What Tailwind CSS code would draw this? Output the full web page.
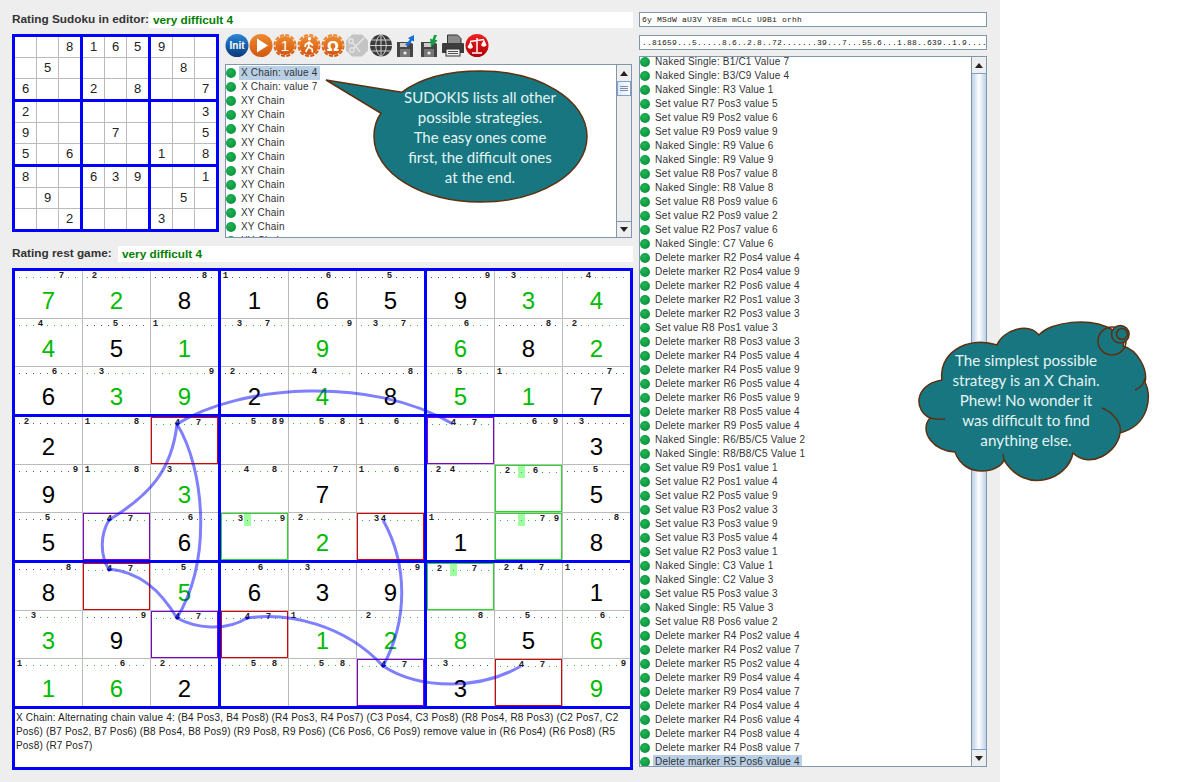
<!DOCTYPE html>
<html lang="en">

<head>
    <meta charset="UTF-8">
    <script src="https://cdn.jsdelivr.net/npm/@tailwindcss/browser@4"></script>
    <title>Sudokis</title>
</head>

<body class="bg-white font-['Liberation_Sans',sans-serif]">
    <svg class="absolute w-0 h-0">
        <defs>
            <linearGradient id="orange" x1="0" y1="0" x2="0" y2="1"><stop offset="0" stop-color="#ee8a30"/><stop offset="1" stop-color="#d4560e"/></linearGradient>
            <linearGradient id="blue" x1="0" y1="0" x2="0" y2="1"><stop offset="0" stop-color="#2a86d8"/><stop offset="1" stop-color="#0a3878"/></linearGradient>
            <linearGradient id="red" x1="0" y1="0" x2="0" y2="1"><stop offset="0" stop-color="#f02020"/><stop offset="1" stop-color="#b00008"/></linearGradient>
        </defs>
    </svg>

    <div class="relative w-[1200px] h-[782px] overflow-hidden">
        <div class="w-[1000px] h-[782px] bg-[#eeeeee] flex pl-3 pt-3 gap-[6px]">
            <!-- Left column -->
            <div class="w-[621px]">
                <div class="flex items-center h-4">
                    <span class="w-[137px] whitespace-nowrap text-[11.8px] font-bold text-[#333333]">Rating Sudoku in editor:</span>
                    <div class="flex-1 h-4 bg-white pl-1 text-[11.8px] leading-4 font-bold text-[#008000]">very difficult 4</div>
                </div>

                <div class="flex mt-[6px] gap-[6px] h-[204px]">
                    <div id="editor" class="w-[207px] h-[198px] bg-[#0000ff] p-[3px] grid grid-cols-[repeat(3,65px)] grid-rows-[repeat(3,62px)] gap-[3px]"></div>
                    <div class="w-[407px]">
                        <div class="flex h-[30px] items-start">
                            <svg class="w-6 h-6" viewBox="0 0 24 24"><circle cx="12" cy="11.5" r="11.5" fill="url(#blue)"/><text x="12" y="15" text-anchor="middle" font-size="10" font-weight="700" fill="#fff" font-family="Liberation Sans">Init</text></svg>
                            <svg class="w-6 h-6" viewBox="0 0 24 24"><circle cx="12" cy="11.5" r="11.5" fill="url(#orange)"/><path d="M8 4.5 19 11.5 8 18.5Z" fill="#fff"/></svg>
                            <svg class="w-6 h-6" viewBox="0 0 24 24"><circle cx="12" cy="11.5" r="9.5" fill="url(#orange)"/><circle cx="12" cy="11.5" r="10.5" fill="none" stroke="url(#orange)" stroke-width="2" stroke-dasharray="4 1.5"/><text x="12" y="17" text-anchor="middle" font-size="15" fill="#fff" font-family="Liberation Sans">1</text></svg>
                            <svg class="w-6 h-6" viewBox="0 0 24 24"><circle cx="12" cy="11.5" r="9.5" fill="url(#orange)"/><circle cx="12" cy="11.5" r="10.5" fill="none" stroke="url(#orange)" stroke-width="2" stroke-dasharray="4 1.5"/><circle cx="12.5" cy="4.8" r="1.7" fill="#fff"/><path d="M12.5 7.5 11.5 13 8.5 18M11.5 13 15 15 15.5 18.5M12.5 8 8.5 10.5 8 13M12.5 8.5 16 11.5" fill="none" stroke="#fff" stroke-width="1.7"/></svg>
                            <svg class="w-6 h-6" viewBox="0 0 24 24"><circle cx="12" cy="11.5" r="9.5" fill="url(#orange)"/><circle cx="12" cy="11.5" r="10.5" fill="none" stroke="url(#orange)" stroke-width="2" stroke-dasharray="4 1.5"/><text x="12" y="16.5" text-anchor="middle" font-size="14" font-weight="700" fill="#fff" font-family="DejaVu Sans">Ω</text></svg>
                            <svg class="w-6 h-6" viewBox="0 0 24 24"><path d="M7 .5h10l6 6v10l-6 6H7l-6-6v-10Z" fill="#c4c4c4"/><path d="M19 4 9 14M8 9 15 18" stroke="#e4e4e4" stroke-width="1.6" fill="none"/><circle cx="7" cy="16" r="2.2" fill="none" stroke="#e4e4e4" stroke-width="1.4"/><circle cx="6" cy="7" r="2.2" fill="none" stroke="#e4e4e4" stroke-width="1.4"/></svg>
                            <svg class="w-6 h-6" viewBox="0 0 24 24"><circle cx="12" cy="11.5" r="11" fill="#3c3c3c"/><path d="M1 11.5h22M2.5 6h19M2.5 17h19M12 .5v22M12 .5C5 5 5 18 12 22.5M12 .5C19 5 19 18 12 22.5" fill="none" stroke="#ddd" stroke-width=".9"/></svg>
                            <svg class="w-6 h-6" viewBox="0 0 24 24"><path d="M4 8h13l3 2v13H4Z" fill="#444444"/><rect x="7" y="9" width="7" height="4" fill="#cccccc"/><rect x="7" y="15" width="10" height="8" fill="#777777"/><circle cx="12" cy="19" r="1.6" fill="#eeeeee"/><path d="M12 11 17 5.5 15 4 21 1 21 7.5 19 6.5 15 12Z" fill="#1470d8"/></svg>
                            <svg class="w-6 h-6" viewBox="0 0 24 24"><path d="M4 8h13l3 2v13H4Z" fill="#444444"/><rect x="7" y="9" width="7" height="4" fill="#cccccc"/><rect x="7" y="15" width="10" height="8" fill="#777777"/><circle cx="12" cy="19" r="1.6" fill="#eeeeee"/><path d="M20 1 18 5.5 20.5 6.5 14 13 13 4.5 15.5 5.5 17 1Z" fill="#10a040"/></svg>
                            <svg class="w-6 h-6" viewBox="0 0 24 24"><path d="M6.5 1h10l3.5 3.5V10H6.5Z" fill="#8a8a8a" stroke="#333"/><path d="M2 9h20a1 1 0 0 1 1 1v9H1v-9a1 1 0 0 1 1-1Z" fill="#3c3c3c"/><rect x="5" y="15" width="14" height="7" fill="#eee" stroke="#333"/><path d="M7 17.5h10M7 19.5h10" stroke="#555"/></svg>
                            <svg class="w-6 h-6" viewBox="0 0 24 24"><circle cx="12" cy="11.5" r="11.5" fill="url(#red)"/><path d="M12 4v14M7 19h10M5 7.5 19 5.5" stroke="#fff" stroke-width="1.5" fill="none"/><path d="M2.5 13 5.5 7.5 8 13a3 3 0 0 1-5.5 0ZM16 11 19 5.5 21.5 11a3 3 0 0 1-5.5 0Z" fill="#fff"/></svg>
                        </div>
                        <div class="relative h-[174px] bg-white border border-[#8296ab] overflow-hidden">
                            <div id="strategies" class="pt-px"></div>
                            <div class="absolute right-0 top-0 bottom-0 w-[15px] bg-[#eeeeee] border-l border-[#8296ab] flex flex-col">
                                <div class="h-4 flex items-center justify-center"><div class="w-0 h-0 border-x-[4px] border-x-transparent border-b-[5px] border-b-[#222222]"></div></div>
                                <div class="h-[15px] bg-gradient-to-r from-[#dde8f5] to-white border border-[#7fa0d0] flex flex-col justify-center gap-px px-[2px]">
                                    <div class="h-px bg-[#7a8fb0]"></div><div class="h-px bg-[#7a8fb0]"></div><div class="h-px bg-[#7a8fb0]"></div>
                                </div>
                                <div class="flex-1"></div>
                                <div class="h-4 border-t border-[#8296ab] flex items-center justify-center"><div class="w-0 h-0 border-x-[4px] border-x-transparent border-t-[5px] border-t-[#222222]"></div></div>
                            </div>
                        </div>
                    </div>
                </div>

                <div class="flex items-center h-4 mt-2">
                    <span class="w-[106px] whitespace-nowrap text-[11.8px] font-bold text-[#333333]">Rating rest game:</span>
                    <div class="flex-1 h-4 bg-white pl-1 text-[11.8px] leading-4 font-bold text-[#008000]">very difficult 4</div>
                </div>

                <div class="mt-[6px] w-[621px] bg-[#0000ff] p-[3px]">
                    <div id="game" class="grid grid-cols-[repeat(3,203px)] grid-rows-[repeat(3,143px)] gap-[3px]"></div>
                    <div class="mt-[3px] h-[58px] bg-white px-px pt-[2px] text-[10px] leading-[14px] tracking-[0.17px] text-[#222222]">
                        X Chain: Alternating chain value 4: (B4 Pos3, B4 Pos8) (R4 Pos3, R4 Pos7) (C3 Pos4, C3 Pos8) (R8 Pos4, R8 Pos3) (C2 Pos7, C2 Pos6) (B7 Pos2, B7 Pos6) (B8 Pos4, B8 Pos9) (R9 Pos8, R9 Pos6) (C6 Pos6, C6 Pos9) remove value in (R6 Pos4) (R6 Pos8) (R5 Pos8) (R7 Pos7)
                    </div>
                </div>
            </div>

            <!-- Right column -->
            <div class="w-[348px]">
                <div class="h-[15px] bg-white border border-[#8296ab] pl-[2px] font-['Liberation_Mono',monospace] text-[8px] leading-[13px] tracking-[0.2px] text-[#222222] whitespace-pre overflow-hidden">6y MSdW aU3V Y8Em mCLc U9Bi orhh</div>
                <div class="mt-2 h-[15px] bg-white border border-[#8296ab] pl-[2px] font-['Liberation_Mono',monospace] text-[8px] leading-[13px] tracking-[0.2px] text-[#222222] whitespace-pre overflow-hidden">..81659...5.....8.6..2.8..72.......39...7...55.6...1.88..639..1.9....</div>
                <div class="relative mt-[6px] h-[711px] bg-white border border-[#8296ab] overflow-hidden">
                    <div id="steps" class="-mt-[2px]"></div>
                    <div class="absolute right-0 top-0 bottom-0 w-[15px] bg-[#eeeeee] border-l border-[#8296ab] flex flex-col">
                        <div class="h-4 flex items-center justify-center"><div class="w-0 h-0 border-x-[4px] border-x-transparent border-b-[5px] border-b-[#222222]"></div></div>
                        <div class="flex-1 bg-gradient-to-r from-[#bdd0e8] via-white to-[#bdd0e8] border-y border-[#7fa0d0] flex flex-col justify-center gap-px px-[2px]">
                            <div class="h-px bg-[#7a8fb0]"></div><div class="h-px bg-[#7a8fb0]"></div><div class="h-px bg-[#7a8fb0]"></div>
                        </div>
                        <div class="h-4 flex items-center justify-center"><div class="w-0 h-0 border-x-[4px] border-x-transparent border-t-[5px] border-t-[#222222]"></div></div>
                    </div>
                </div>
            </div>
        </div>

        <!-- Chain arrows lying over the grid -->
        <svg class="absolute inset-0 w-[1200px] h-[782px] pointer-events-none" viewBox="0 0 1200 782">
            <g fill="none" stroke="#0000ff" stroke-opacity="0.5" stroke-width="3">
                <path d="M177 424C240 385 370 375 453 424"/>
                <path d="M177 424C205 470 212 560 177 618"/>
                <path d="M177 424C172 470 150 495 109 520"/>
                <path d="M109 520C100 535 100 555 109 570"/>
                <path d="M109 569C140 572 160 590 177 618"/>
                <path d="M177 618C195 628 225 632 247 618"/>
                <path d="M247 618C290 612 345 625 383 666"/>
                <path d="M383 666C420 690 480 690 521 666"/>
                <path d="M383 666C408 620 408 565 383 520"/>
            </g>
            <g fill="#0000c0">
                <circle cx="177" cy="424" r="1.5"/><circle cx="109" cy="520" r="1.5"/><circle cx="109" cy="570" r="1.5"/>
                <circle cx="177" cy="618" r="1.5"/><circle cx="247" cy="618" r="1.5"/><circle cx="383" cy="666" r="1.5"/>
            </g>
        </svg>

        <!-- Speech bubble -->
        <div class="absolute left-[320px] top-[65px] w-[275px] h-[145px]">
            <svg class="absolute inset-0 w-full h-full" viewBox="320 65 275 145">
                <path d="M326 80 401.7 92.3C425 75 455 71 480.5 71C540 71 587 100 587 136.5C587 173 540 202 480.5 202C421 202 374 173 374 136.5C374 128 376 120 381 113.3Z" fill="#17767f" stroke="#5d3010" stroke-width="1.5"/>
            </svg>
            <div class="absolute left-[54px] top-[22px] w-[212px] text-center font-['Lato',sans-serif] text-[15px] leading-5 text-[#e4f4f4]">
                SUDOKIS lists all other<br>possible strategies.<br>The easy ones come<br>first, the difficult ones<br>at the end.
            </div>
        </div>

        <!-- Thought cloud -->
        <div class="absolute left-[910px] top-[315px] w-[250px] h-[175px]">
            <svg class="absolute inset-0 w-full h-full" viewBox="910 315 250 175">
                <path d="M942 380C938 355 965 335 997 345C1003 330 1028 322 1039 335C1050 322 1090 316 1113 330C1125 328 1125 340 1123 346C1138 350 1148 370 1145 382C1152 395 1150 425 1120 433C1118 452 1090 470 1073 453C1068 480 1025 495 1004 460C1000 472 965 480 955 452C935 452 918 432 930 418C915 412 912 385 942 380Z" fill="#17767f" stroke="#5d3010" stroke-width="1.5"/>
                <g fill="none" stroke="#5d3010" stroke-width="1.5">
                    <path d="M1102 408C1115 413 1122 425 1120 433"/>
                    <path d="M1145 378C1144 384 1140 388 1135 390"/>
                    <path d="M930 418C935 419 940 420 945 419"/>
                    <path d="M1004 460 1003 454"/>
                    <circle cx="1112" cy="341" r="14"/>
                    <circle cx="1120.3" cy="334.3" r="8.8" fill="#17767f"/>
                    <circle cx="1122" cy="334" r="5.5"/>
                </g>
            </svg>
            <div class="absolute left-[11px] top-[35px] w-[210px] text-center font-['Lato',sans-serif] text-[15.2px] leading-5 text-[#e4f4f4]">
                The simplest possible<br>strategy is an X Chain.<br>Phew! No wonder it<br>was difficult to find<br>anything else.
            </div>
        </div>
    </div>

    <script>
        const editorRows = ["..81659..", ".5.....8.", "6..2.8..7", "2.......3", "9...7...5", "5.6...1.8", "8..639..1", ".9.....5.", "..2...3.."];

        // value (g = solved, green), candidates, box colour
        const gameRows = [
            ["7g:7", "2g:2", "8:8", "1:1", "6:6", "5:5", "9:9", "3g:3", "4g:4"],
            ["4g:4", "5:5", "1g:1", ".:37", "9g:9", ".:37", "6g:6", "8:8", "2g:2"],
            ["6:6", "3g:3", "9g:9", "2:2", "4g:4", "8:8", "5g:5", "1g:1", "7:7"],
            ["2:2", ".:18", ".:47:r", ".:589", ".:58", ".:16", ".:47:p", ".:69", "3:3"],
            ["9:9", ".:18", "3g:3", ".:48", "7:7", ".:16", ".:24", ".:26:g", "5:5"],
            ["5:5", ".:47:p", "6:6", ".:39:g", "2g:2", ".:34:r", "1:1", ".:79:g", "8:8"],
            ["8:8", ".:47:r", "5g:5", "6:6", "3:3", "9:9", ".:27:g", ".:247", "1:1"],
            ["3g:3", "9:9", ".:47:p", ".:47:r", "1g:1", "2g:2", "8g:8", "5:5", "6g:6"],
            ["1g:1", "6g:6", "2:2", ".:58", ".:58", ".:47:p", "3:3", ".:47:r", "9g:9"],
        ];

        const boxClass = {
            r: "border border-[#dd0000]",
            p: "border border-[#8000d0]",
            g: "border border-[#22dd22]",
        };

        // blocks are filled row by row so that the grey and blue lines come from the gaps
        function forEachBlock(fn) {
            for (let br = 0; br < 3; br++) for (let bc = 0; bc < 3; bc++) fn(br, bc);
        }

        const editor = document.getElementById("editor");
        forEachBlock((br, bc) => {
            let html = '<div class="bg-[#bbbbbb] grid grid-cols-[repeat(3,21px)] grid-rows-[repeat(3,20px)] gap-px">';
            for (let r = br * 3; r < br * 3 + 3; r++) for (let c = bc * 3; c < bc * 3 + 3; c++) {
                const v = editorRows[r][c];
                html += `<div class="bg-white flex items-center justify-center text-[13px] text-[#222222]">${v === "." ? "" : v}</div>`;
            }
            editor.innerHTML += html + "</div>";
        });

        const game = document.getElementById("game");
        forEachBlock((br, bc) => {
            let html = '<div class="bg-[#bbbbbb] grid grid-cols-[repeat(3,67px)] grid-rows-[repeat(3,47px)] gap-px">';
            for (let r = br * 3; r < br * 3 + 3; r++) for (let c = bc * 3; c < bc * 3 + 3; c++) {
                const [head, marks, box] = gameRows[r][c].split(":");
                const solved = head.endsWith("g");
                const given = head !== "." && !solved;
                const value = head === "." ? "" : head[0];
                let cand = "";
                for (let n = 1; n <= 9; n++) {
                    const hit = marks.includes(String(n));
                    const mark = hit
                        ? n
                        : `<i class="w-px h-px ${given ? "bg-[#555555]" : "bg-[#33bb33]"}"></i>`;
                    const glow = box === "g" && n === 4 ? "bg-[#a0ffa0]" : "";
                    cand += `<span class="w-[7px] h-[12px] flex items-center justify-center ${glow}">${mark}</span>`;
                }
                html += `<div class="bg-white flex flex-col ${box ? boxClass[box] : ""}">
                    <div class="flex pl-[1px] h-[13px] font-['Liberation_Mono',monospace] text-[9px] font-bold text-[#222222]">${cand}</div>
                    <div class="flex-1 flex items-center justify-center text-[24px] leading-none ${solved ? "text-[#00bb00]" : "text-black"}">${value}</div>
                </div>`;
            }
            game.innerHTML += html + "</div>";
        });

        function listRow(text, selected) {
            return `<div class="flex items-center h-[14px] text-[10px] tracking-[0.2px] text-[#333333]">
                <span class="w-[10px] h-[10px] rounded-full bg-[radial-gradient(circle_at_40%_35%,#22b455,#008a35)]"></span>
                <span class="ml-[3px] px-[2px] h-[14px] leading-[14px] whitespace-nowrap ${selected ? "bg-[#b8cfe5]" : ""}">${text}</span>
            </div>`;
        }

        const strategies = ["X Chain: value 4", "X Chain: value 7"];
        for (let i = 0; i < 11; i++) strategies.push("XY Chain");
        document.getElementById("strategies").innerHTML = strategies.map((s, i) => listRow(s, i === 0)).join("");

        const steps = `Naked Single: B1/C1 Value 7
Naked Single: B3/C9 Value 4
Naked Single: R3 Value 1
Set value R7 Pos3 value 5
Set value R9 Pos2 value 6
Set value R9 Pos9 value 9
Naked Single: R9 Value 6
Naked Single: R9 Value 9
Set value R8 Pos7 value 8
Naked Single: R8 Value 8
Set value R8 Pos9 value 6
Set value R2 Pos9 value 2
Set value R2 Pos7 value 6
Naked Single: C7 Value 6
Delete marker R2 Pos4 value 4
Delete marker R2 Pos4 value 9
Delete marker R2 Pos6 value 4
Delete marker R2 Pos1 value 3
Delete marker R2 Pos3 value 3
Set value R8 Pos1 value 3
Delete marker R8 Pos3 value 3
Delete marker R4 Pos5 value 4
Delete marker R4 Pos5 value 9
Delete marker R6 Pos5 value 4
Delete marker R6 Pos5 value 9
Delete marker R8 Pos5 value 4
Delete marker R9 Pos5 value 4
Naked Single: R6/B5/C5 Value 2
Naked Single: R8/B8/C5 Value 1
Set value R9 Pos1 value 1
Set value R2 Pos1 value 4
Set value R2 Pos5 value 9
Set value R3 Pos2 value 3
Set value R3 Pos3 value 9
Set value R3 Pos5 value 4
Set value R2 Pos3 value 1
Naked Single: C3 Value 1
Naked Single: C2 Value 3
Set value R5 Pos3 value 3
Naked Single: R5 Value 3
Set value R8 Pos6 value 2
Delete marker R4 Pos2 value 4
Delete marker R4 Pos2 value 7
Delete marker R5 Pos2 value 4
Delete marker R9 Pos4 value 4
Delete marker R9 Pos4 value 7
Delete marker R4 Pos4 value 4
Delete marker R4 Pos6 value 4
Delete marker R4 Pos8 value 4
Delete marker R4 Pos8 value 7
Delete marker R5 Pos6 value 4`.split("\n");
        document.getElementById("steps").innerHTML = steps.map((s, i) => listRow(s, i === steps.length - 1)).join("");
    </script>
</body>

</html>
